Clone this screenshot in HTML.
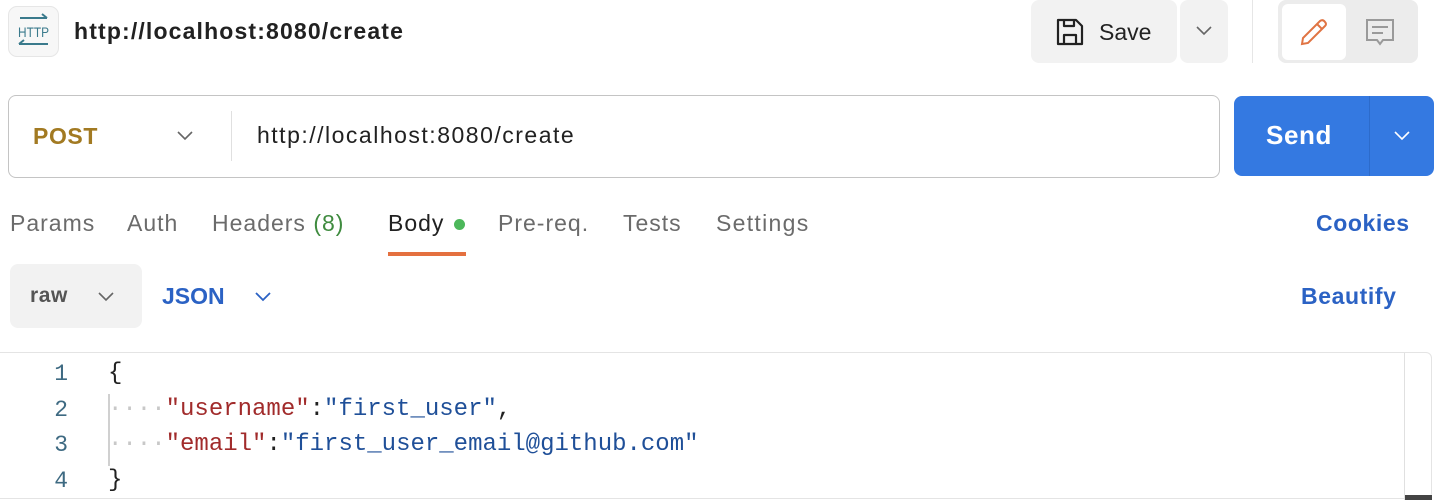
<!DOCTYPE html>
<html style="overflow:hidden;height:500px"><head><meta charset="utf-8"><style>
body{margin:0;width:1438px;height:500px;background:#fff;font-family:"Liberation Sans",sans-serif;position:relative;overflow:hidden}
.a{position:absolute}
.tab{position:absolute;top:210px;font-size:23px;color:#6b6b6b;letter-spacing:1px}
.code{position:absolute;left:108px;font-family:"Liberation Mono",monospace;font-size:24px;white-space:pre;color:#212121}
.ln{position:absolute;left:40px;width:28px;text-align:right;font-family:"Liberation Mono",monospace;font-size:23px;color:#3e6a82}
.k{color:#a12b2b}.s{color:#1f4f98}.d{color:#c8c8c8}
</style></head><body>
<div class="a" style="left:8px;top:6px;width:51px;height:51px;border:1px solid #e6e6e6;border-radius:9px;background:#f7f7f7;box-sizing:border-box"></div>
<svg class="a" style="left:14px;top:12px" width="40" height="38" viewBox="0 0 40 38">
<path d="M6 6 H33 M28 2 L33 6" stroke="#3a7a8c" stroke-width="2" fill="none"/>
<text x="4" y="25" font-family="Liberation Sans Narrow, Liberation Sans" font-size="14" fill="#3a7a8c" textLength="31" lengthAdjust="spacingAndGlyphs">HTTP</text>
<path d="M5 32 H34 M10 28 L5 32" stroke="#3a7a8c" stroke-width="2" fill="none"/>
</svg>
<div class="a" style="left:74px;top:18px;font-size:23px;font-weight:bold;color:#212121;letter-spacing:1.15px">http://localhost:8080/create</div>
<div class="a" style="left:1031px;top:0;width:146px;height:63px;background:#f2f2f2;border-radius:8px"></div>
<svg class="a" style="left:1055px;top:17px" width="30" height="30" viewBox="0 0 30 30"><path d="M3 3 H21 L27 9 V27 H3 Z M9 3 V9 H19 V3 M9 27 V18 H21 V27" fill="none" stroke="#222" stroke-width="2.2" stroke-linejoin="round"/></svg>
<div class="a" style="left:1099px;top:19px;font-size:23px;color:#222">Save</div>
<div class="a" style="left:1180px;top:0;width:48px;height:63px;background:#f2f2f2;border-radius:8px"></div>
<svg class="a" style="left:1196px;top:26px" width="16" height="10"><path d="M1 1 L8 8 L15 1" fill="none" stroke="#666" stroke-width="1.6"/></svg>
<div class="a" style="left:1252px;top:0;width:1px;height:63px;background:#e6e6e6"></div>
<div class="a" style="left:1278px;top:0;width:140px;height:63px;background:#ececec;border-radius:8px"></div>
<div class="a" style="left:1282px;top:4px;width:64px;height:56px;background:#fff;border-radius:6px"></div>
<svg class="a" style="left:1298px;top:16px" width="32" height="32" viewBox="0 0 32 32"><path d="M4 28 L5 22 L22 5 Q25 3 27 6 Q29 8 27 10 L10 27 Z M19 8 L24 13" fill="none" stroke="#e07443" stroke-width="2"/></svg>
<svg class="a" style="left:1364px;top:17px" width="32" height="32" viewBox="0 0 32 32"><path d="M3 3 H29 V23 H19 L16 27 L13 23 H3 Z M8 10 H24 M8 16 H19" fill="none" stroke="#9a9a9a" stroke-width="2"/></svg>
<div class="a" style="left:8px;top:95px;width:1212px;height:83px;border:1.5px solid #c4c4c4;border-radius:8px;box-sizing:border-box"></div>
<div class="a" style="left:33px;top:123px;font-size:23px;font-weight:bold;color:#a27a22;letter-spacing:0.6px">POST</div>
<svg class="a" style="left:177px;top:131px" width="16" height="10"><path d="M1 1 L8 8 L15 1" fill="none" stroke="#666" stroke-width="1.6"/></svg>
<div class="a" style="left:231px;top:111px;width:1px;height:50px;background:#e0e0e0"></div>
<div class="a" style="left:257px;top:122px;font-size:23px;color:#212121;letter-spacing:1.5px">http://localhost:8080/create</div>
<div class="a" style="left:1234px;top:96px;width:200px;height:80px;background:#3479e1;border-radius:8px"></div>
<div class="a" style="left:1369px;top:96px;width:1px;height:80px;background:#2c6bcb"></div>
<div class="a" style="left:1266px;top:120px;font-size:26px;font-weight:bold;color:#fff;letter-spacing:0.6px">Send</div>
<svg class="a" style="left:1394px;top:131px" width="16" height="10"><path d="M1 1 L8 8 L15 1" fill="none" stroke="#fff" stroke-width="1.6"/></svg>
<div class="tab" style="left:10px">Params</div>
<div class="tab" style="left:127px">Auth</div>
<div class="tab" style="left:212px">Headers <span style="color:#3f8b3f">(8)</span></div>
<div class="tab" style="left:388px;color:#212121">Body</div>
<div class="a" style="left:454px;top:219px;width:11px;height:11px;border-radius:50%;background:#4cb75a"></div>
<div class="a" style="left:388px;top:252px;width:78px;height:4px;background:#e4703f"></div>
<div class="tab" style="left:498px">Pre-req.</div>
<div class="tab" style="left:623px">Tests</div>
<div class="tab" style="left:716px;letter-spacing:1.3px">Settings</div>
<div class="a" style="left:1316px;top:210px;font-size:23px;font-weight:bold;color:#2b62c4;letter-spacing:0.6px">Cookies</div>
<div class="a" style="left:10px;top:264px;width:132px;height:64px;background:#f2f2f2;border-radius:8px"></div>
<div class="a" style="left:30px;top:284px;font-size:21px;font-weight:bold;color:#555;letter-spacing:0.6px">raw</div>
<svg class="a" style="left:98px;top:292px" width="16" height="10"><path d="M1 1 L8 8 L15 1" fill="none" stroke="#666" stroke-width="1.6"/></svg>
<div class="a" style="left:162px;top:283px;font-size:23px;font-weight:bold;color:#2b62c4">JSON</div>
<svg class="a" style="left:255px;top:292px" width="16" height="10"><path d="M1 1 L8 8 L15 1" fill="none" stroke="#2b62c4" stroke-width="1.8"/></svg>
<div class="a" style="left:1301px;top:283px;font-size:23px;font-weight:bold;color:#2b62c4;letter-spacing:0.6px">Beautify</div>
<div class="a" style="left:-10px;top:352px;width:1442px;height:147px;border:1.5px solid #e4e4e4;border-radius:6px;box-sizing:border-box"></div>
<div class="a" style="left:1404px;top:353px;width:1px;height:147px;background:#e0e0e0"></div>
<div class="a" style="left:1405px;top:495px;width:27px;height:5px;background:#444"></div>
<div class="a" style="left:108px;top:394px;width:1.5px;height:72px;background:#d0d0d0"></div>
<div class="ln" style="top:361px">1</div>
<div class="ln" style="top:397px">2</div>
<div class="ln" style="top:432px">3</div>
<div class="ln" style="top:468px">4</div>
<div class="code" style="top:360px">{</div>
<div class="code" style="top:396px"><span class="d">····</span><span class="k">"username"</span>:<span class="s">"first_user"</span>,</div>
<div class="code" style="top:431px"><span class="d">····</span><span class="k">"email"</span>:<span class="s">"first_user_email@github.com"</span></div>
<div class="code" style="top:467px">}</div>
</body></html>
